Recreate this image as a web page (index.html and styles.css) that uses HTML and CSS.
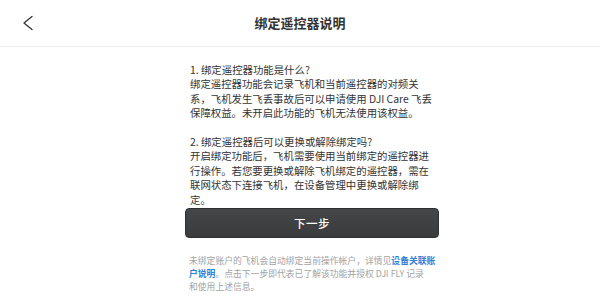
FILE: index.html
```html
<!DOCTYPE html>
<html lang="zh-CN">
<head>
<meta charset="utf-8">
<title>绑定遥控器说明</title>
<link rel="stylesheet" href="styles.css">
</head>
<body>
<header class="topbar">
  <button class="back" aria-label="返回">
    <svg width="12" height="16" viewBox="0 0 12 16"><path d="M10 1.5 L2 8 L10 14.5" fill="none" stroke="#333" stroke-width="1.3" stroke-linecap="round" stroke-linejoin="round"/></svg>
  </button>
  <h1 class="title">绑定遥控器说明</h1>
</header>
<main class="content">
  <div class="desc">
    <p>1. 绑定遥控器功能是什么?<br>绑定遥控器功能会记录飞机和当前遥控器的对频关<br>系，飞机发生飞丢事故后可以申请使用 DJI Care 飞丢<br>保障权益。未开启此功能的飞机无法使用该权益。</p>
    <p>2. 绑定遥控器后可以更换或解除绑定吗?<br>开启绑定功能后，飞机需要使用当前绑定的遥控器进<br>行操作。若您要更换或解除飞机绑定的遥控器，需在<br>联网状态下连接飞机，在设备管理中更换或解除绑<br>定。</p>
  </div>
  <button class="next">下一步</button>
  <p class="note">未绑定账户的飞机会自动绑定当前操作帐户，详情见<a class="link">设备关联账<br>户说明</a>。点击下一步即代表已了解该功能并授权 DJI FLY 记录<br>和使用上述信息。</p>
</main>
</body>
</html>
```

FILE: styles.css
```css
html, body {
  margin: 0;
  padding: 0;
  background: #ffffff;
}
body {
  width: 600px;
  height: 298px;
  overflow: hidden;
  font-family: "Noto Sans CJK SC", sans-serif;
  color: #333333;
}
.topbar {
  height: 46px;
  border-bottom: 1px solid #f0f0f0;
  display: flex;
  align-items: center;
  justify-content: center;
  position: relative;
}
.back {
  position: absolute;
  left: 21px;
  top: 15px;
  width: 14px;
  height: 16px;
  padding: 0;
  border: 0;
  background: none;
  display: flex;
  align-items: center;
  justify-content: center;
}
.title {
  margin: 0;
  font-size: 13px;
  font-weight: 700;
  color: #333333;
  line-height: 16px;
}
.content {
  margin-left: 185px;
  width: 254px;
  padding-top: 16px;
}
.desc {
  padding-left: 5px;
  font-size: 10.4px;
  line-height: 14.4px;
  color: #333333;
  white-space: nowrap;
}
.desc p {
  margin: 0 0 14.4px 0;
}
.desc p:last-child {
  margin-bottom: 0;
}
.next {
  display: block;
  box-sizing: border-box;
  width: 254px;
  height: 30px;
  margin: 1px 0 0 0;
  border: 1px solid #2e2f30;
  border-radius: 4px;
  background: linear-gradient(#454647, #3a3b3c);
  color: #ffffff;
  font-family: "Noto Sans CJK SC", sans-serif;
  font-size: 11.5px;
  font-weight: 500;
  letter-spacing: 0.5px;
  padding: 0;
}
.note {
  margin: 17px 0 0 0;
  padding-left: 4px;
  font-size: 8.8px;
  line-height: 12.8px;
  color: #a3a3a3;
  white-space: nowrap;
}
.link {
  color: #2f7fd8;
  font-weight: 600;
}
```
